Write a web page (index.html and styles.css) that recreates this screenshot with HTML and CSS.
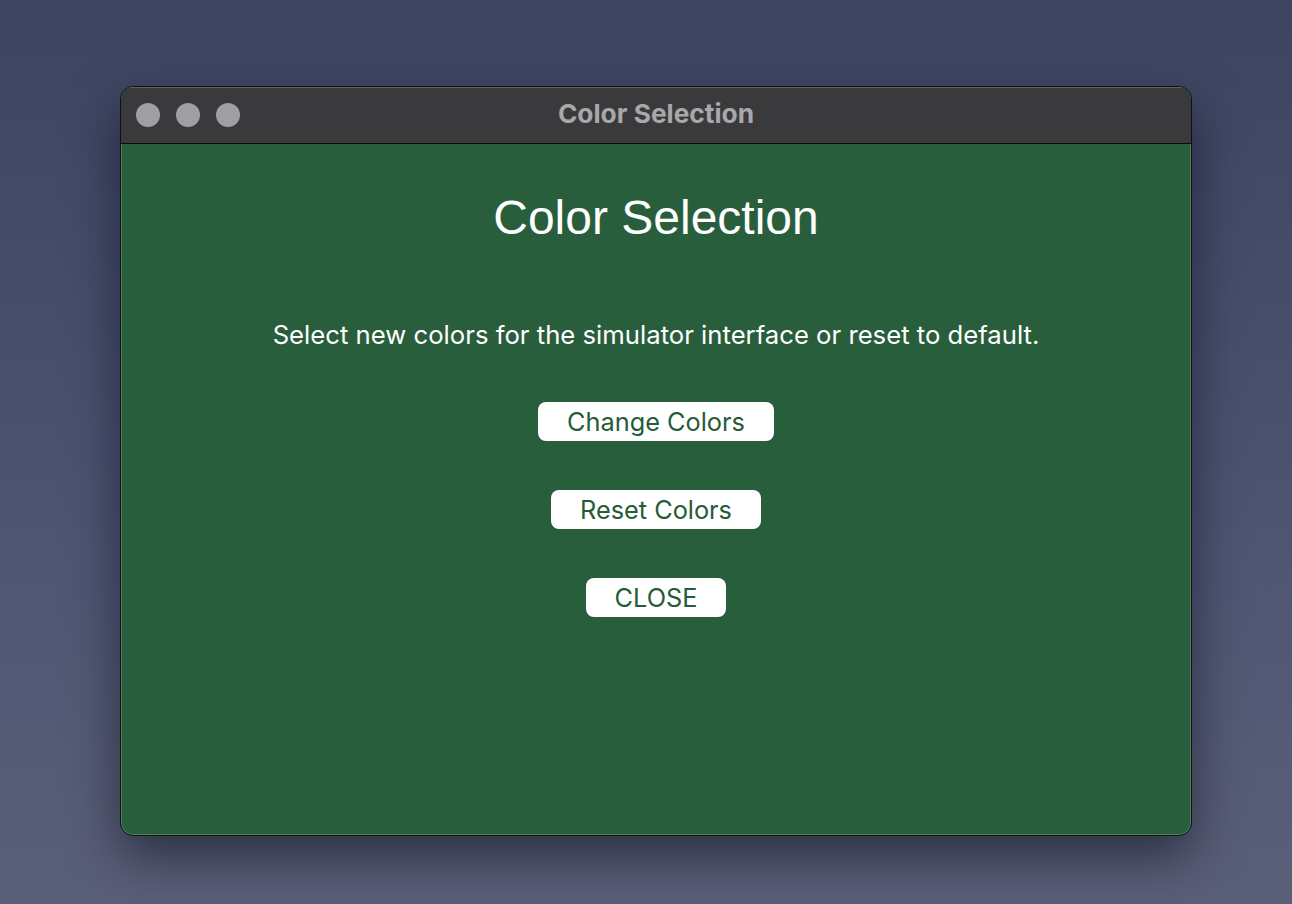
FILE: index.html
```html
<!DOCTYPE html>
<html>
<head>
<meta charset="utf-8">
<link rel="stylesheet" href="styles.css">
</head>
<body>
<div class="desktop">
  <div class="window">
    <div class="titlebar">
      <div class="lights">
        <span class="light"></span>
        <span class="light"></span>
        <span class="light"></span>
      </div>
      <div class="title">Color Selection</div>
    </div>
    <div class="content">
      <h1 class="heading">Color Selection</h1>
      <p class="desc">Select new colors for the simulator interface or reset to default.</p>
      <div class="buttons">
        <button class="btn">Change Colors</button>
        <button class="btn">Reset Colors</button>
        <button class="btn">CLOSE</button>
      </div>
    </div>
  </div>
</div>
</body>
</html>
```
FILE: styles.css
```css
* { box-sizing: border-box; }
html, body { margin: 0; padding: 0; }
body {
  width: 1292px;
  height: 904px;
  overflow: hidden;
  background: linear-gradient(180deg, #3c4460 0%, #4b5270 50%, #5b6079 100%);
  font-family: "Inter", "Liberation Sans", sans-serif;
}
.desktop {
  padding: 86px 0 0 120px;
}
.window {
  width: 1072px;
  height: 750px;
  border-radius: 13px;
  border: 1px solid #111;
  box-shadow: 0 22px 50px rgba(10, 12, 25, 0.55), inset 0 0 0 1px rgba(255,255,255,0.2);
  overflow: hidden;
  display: flex;
  flex-direction: column;
  background: #285e3b;
}
.titlebar {
  height: 57px;
  flex: none;
  background: #3a3a3c;
  border-bottom: 1px solid #0d0d0d;
  display: flex;
  align-items: center;
  position: relative;
  box-shadow: inset 0 1px 0 rgba(255,255,255,0.2);
}
.lights {
  display: flex;
  gap: 16px;
  padding-left: 15px;
}
.light {
  width: 24px;
  height: 24px;
  border-radius: 50%;
  background: #a0a0a2;
}
.title {
  position: absolute;
  left: 0;
  right: 0;
  top: 0;
  bottom: 0;
  display: flex;
  align-items: center;
  justify-content: center;
  color: #a8a8aa;
  font-weight: 700;
  font-size: 26.3px;
  padding-bottom: 4px;
}
.content {
  flex: 1;
  display: flex;
  flex-direction: column;
  align-items: center;
  color: #fff;
}
.heading {
  margin: 46px 0 0;
  font-family: "Liberation Sans", Arial, sans-serif;
  font-weight: 400;
  font-size: 48px;
  line-height: 56px;
}
.desc {
  margin: 73px 0 0;
  font-size: 25.7px;
  line-height: 32px;
}
.buttons {
  display: flex;
  flex-direction: column;
  align-items: center;
  gap: 49px;
  margin-top: 51px;
}
.btn {
  height: 39px;
  padding: 0 29px;
  border: none;
  border-radius: 8px;
  background: #fff;
  color: #265a38;
  font-family: "Inter", "Liberation Sans", sans-serif;
  font-size: 25.3px;
  line-height: 39px;
}
```
